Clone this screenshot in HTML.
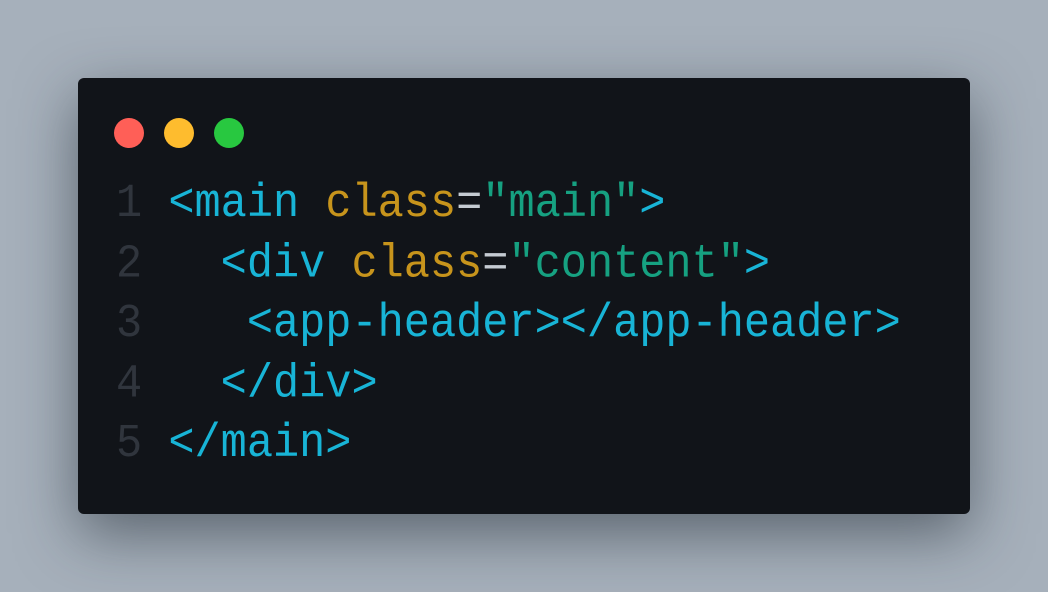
<!DOCTYPE html>
<html><head><style>
html,body{margin:0;padding:0;}
body{width:1048px;height:592px;background:#a6b0bb;position:relative;overflow:hidden;}
.card{position:absolute;left:78px;top:78px;width:892px;height:436px;background:#111419;border-radius:6px;box-shadow:0 20px 60px rgba(30,38,48,0.55);}
.dot{position:absolute;top:40px;width:30px;height:30px;border-radius:50%;}
.code{position:absolute;left:38px;top:97px;font-family:"Liberation Mono",monospace;font-size:43.6px;line-height:55.56px;white-space:pre;transform:scaleY(1.08);transform-origin:0 0;color:#c5cbd2;}
.n{color:#30353d}.t{color:#18b4d6}.a{color:#c7941c}.s{color:#16a181}
</style></head><body>
<div class="card">
<div class="dot" style="left:36px;background:#ff5f57"></div>
<div class="dot" style="left:86px;background:#febc2e"></div>
<div class="dot" style="left:136px;background:#28c840"></div>
<div class="code"><span class="n">1</span> <span class="t">&lt;main</span> <span class="a">class</span>=<span class="s">"main"</span><span class="t">&gt;</span>
<span class="n">2</span>   <span class="t">&lt;div</span> <span class="a">class</span>=<span class="s">"content"</span><span class="t">&gt;</span>
<span class="n">3</span>    <span class="t">&lt;app-header&gt;&lt;/app-header&gt;</span>
<span class="n">4</span>   <span class="t">&lt;/div&gt;</span>
<span class="n">5</span> <span class="t">&lt;/main&gt;</span></div>
</div>
</body></html>
